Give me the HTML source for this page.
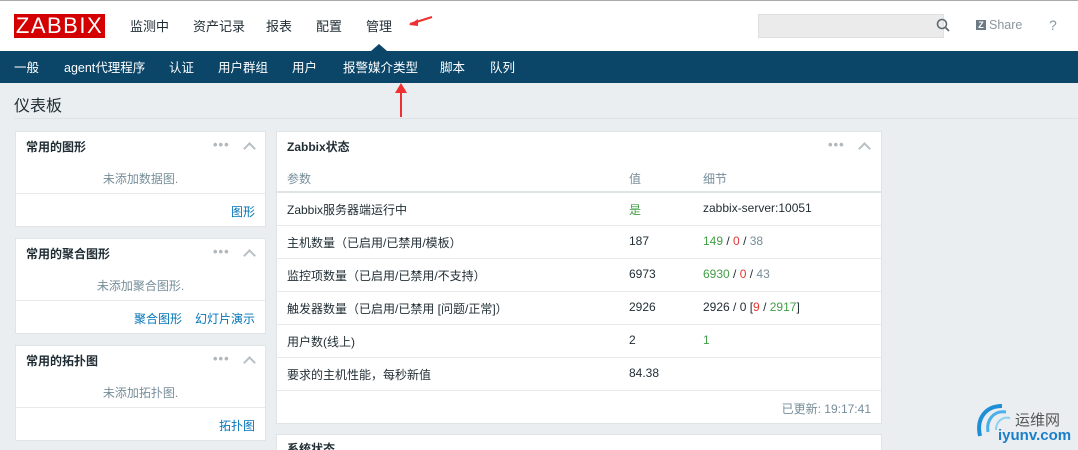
<!DOCTYPE html>
<html><head><meta charset="utf-8"><style>
*{margin:0;padding:0;box-sizing:border-box}
html{width:1078px;height:450px;overflow:hidden}
body{width:1078px;height:450px;overflow:hidden;background:#ebeef0;font-family:"Liberation Sans","Noto Sans CJK SC",sans-serif;font-size:12px;color:#1f2c33;position:relative}
.a{position:absolute;white-space:nowrap}
#top{position:absolute;left:0;top:0;width:1078px;height:51px;background:#fff;border-top:1px solid #aaa}
#sub{position:absolute;left:0;top:51px;width:1078px;height:32px;background:#0b4669}
.nav{font-size:13px;color:#1f2c33;top:16px}
.sn{font-size:12.5px;color:#fff;top:57px}
.w{position:absolute;background:#fff;border:1px solid #dfe4e7}
.wt{position:absolute;left:10px;top:6px;font-weight:bold;font-size:12px;color:#1f2c33}
.dots{position:absolute;top:5px;color:#b0b8bd;font-size:13px;letter-spacing:1px;font-weight:bold}
.car{position:absolute;width:9px;height:9px;border-left:2px solid #b8c0c5;border-top:2px solid #b8c0c5;transform:rotate(45deg)}
.emp{position:absolute;left:0;right:0;text-align:center;color:#768d99}
.hr{position:absolute;left:0;right:0;height:1px;background:#e6eaec}
.lk{position:absolute;color:#0275b8}
.r{position:absolute;left:10px;font-size:12px}
</style></head><body>
<div id="top"></div>
<div class="a" style="left:14px;top:14px;width:91px;height:24px;background:#d40000;color:#fff;font-size:22px;line-height:24px;text-align:center;letter-spacing:1.5px">ZABBIX</div>
<div class="a nav" style="left:130px">监测中</div>
<div class="a nav" style="left:193px">资产记录</div>
<div class="a nav" style="left:266px">报表</div>
<div class="a nav" style="left:316px">配置</div>
<div class="a nav" style="left:366px">管理</div>
<div class="a" style="left:371px;top:44px;width:0;height:0;border-left:8px solid transparent;border-right:8px solid transparent;border-bottom:7px solid #0b4669"></div>
<svg class="a" style="left:408px;top:15px" width="26" height="12"><path d="M2 9 L24 2" stroke="#f03030" stroke-width="2"/><path d="M1 10 L10 4 L10 11Z" fill="#f03030"/></svg>
<div class="a" style="left:758px;top:14px;width:186px;height:24px;background:#ebebeb;border:1px solid #e0e0e0"></div>
<svg class="a" style="left:936px;top:18px" width="14" height="14"><circle cx="6" cy="6" r="4.5" fill="none" stroke="#5f6b72" stroke-width="1.6"/><path d="M9.5 9.5 L13 13" stroke="#5f6b72" stroke-width="1.8"/></svg>
<div class="a" style="left:976px;top:20px;width:10px;height:10px;background:#6b7a83;color:#fff;font-size:9px;font-weight:bold;line-height:10px;text-align:center">Z</div>
<div class="a" style="left:989px;top:18px;color:#8a979e;font-size:12.5px">Share</div>
<div class="a" style="left:1049px;top:17px;color:#8a979e;font-size:14px">?</div>
<div id="sub"></div>
<div class="a sn" style="left:14px">一般</div>
<div class="a sn" style="left:64px">agent代理程序</div>
<div class="a sn" style="left:169px">认证</div>
<div class="a sn" style="left:218px">用户群组</div>
<div class="a sn" style="left:292px">用户</div>
<div class="a sn" style="left:343px">报警媒介类型</div>
<div class="a sn" style="left:440px">脚本</div>
<div class="a sn" style="left:490px">队列</div>
<div class="a" style="left:14px;top:92px;font-size:16px;color:#1f2c33">仪表板</div>
<div class="a" style="left:14px;top:118px;width:1064px;height:1px;background:#dde2e5"></div>
<svg class="a" style="left:394px;top:82px" width="14" height="36"><path d="M7 8 L7 35" stroke="#f03030" stroke-width="2"/><path d="M1 11 L7 1 L13 11Z" fill="#f03030"/></svg>

<div class="w" style="left:15px;top:131px;width:251px;height:96px">
<div class="wt">常用的图形</div><div class="dots" style="left:197px">•••</div><div class="car" style="left:229px;top:12px"></div>
<div class="emp" style="top:38px">未添加数据图.</div><div class="hr" style="top:61px"></div>
<div class="lk" style="right:10px;top:71px">图形</div></div>
<div class="w" style="left:15px;top:238px;width:251px;height:96px">
<div class="wt">常用的聚合图形</div><div class="dots" style="left:197px">•••</div><div class="car" style="left:229px;top:12px"></div>
<div class="emp" style="top:38px">未添加聚合图形.</div><div class="hr" style="top:61px"></div>
<div class="lk" style="right:10px;top:71px">幻灯片演示</div><div class="lk" style="left:118px;top:71px">聚合图形</div></div>
<div class="w" style="left:15px;top:345px;width:251px;height:96px">
<div class="wt">常用的拓扑图</div><div class="dots" style="left:197px">•••</div><div class="car" style="left:229px;top:12px"></div>
<div class="emp" style="top:38px">未添加拓扑图.</div><div class="hr" style="top:61px"></div>
<div class="lk" style="right:10px;top:71px">拓扑图</div></div>

<div class="w" style="left:276px;top:131px;width:606px;height:293px">
<div class="wt">Zabbix状态</div><div class="dots" style="left:551px">•••</div><div class="car" style="left:583px;top:12px"></div>
<div class="r" style="top:38px;color:#768d99">参数</div><div class="r" style="left:352px;top:38px;color:#768d99">值</div><div class="r" style="left:426px;top:38px;color:#768d99">细节</div>
<div class="hr" style="top:59px;height:2px;background:#dfe4e7"></div>
<div class="r" style="top:69px">Zabbix服务器端运行中</div><div class="r" style="left:352px;top:69px;color:#429e47">是</div><div class="r" style="left:426px;top:69px">zabbix-server:10051</div>
<div class="hr" style="top:93px"></div>
<div class="r" style="top:102px">主机数量（已启用/已禁用/模板）</div><div class="r" style="left:352px;top:102px">187</div><div class="r" style="left:426px;top:102px"><span style="color:#429e47">149</span> / <span style="color:#e33734">0</span> / <span style="color:#768d99">38</span></div>
<div class="hr" style="top:126px"></div>
<div class="r" style="top:135px">监控项数量（已启用/已禁用/不支持）</div><div class="r" style="left:352px;top:135px">6973</div><div class="r" style="left:426px;top:135px"><span style="color:#429e47">6930</span> / <span style="color:#e33734">0</span> / <span style="color:#768d99">43</span></div>
<div class="hr" style="top:159px"></div>
<div class="r" style="top:168px">触发器数量（已启用/已禁用 [问题/正常]）</div><div class="r" style="left:352px;top:168px">2926</div><div class="r" style="left:426px;top:168px">2926 / 0 [<span style="color:#e33734">9</span> / <span style="color:#429e47">2917</span>]</div>
<div class="hr" style="top:192px"></div>
<div class="r" style="top:201px">用户数(线上)</div><div class="r" style="left:352px;top:201px">2</div><div class="r" style="left:426px;top:201px;color:#429e47">1</div>
<div class="hr" style="top:225px"></div>
<div class="r" style="top:234px">要求的主机性能，每秒新值</div><div class="r" style="left:352px;top:234px">84.38</div>
<div class="hr" style="top:258px"></div>
<div class="r" style="left:auto;right:10px;top:268px;color:#768d99">已更新: 19:17:41</div>
</div>
<div class="w" style="left:276px;top:434px;width:606px;height:16px;border-bottom:none;overflow:hidden"><div class="wt" style="top:5px">系统状态</div></div>

<svg class="a" style="left:972px;top:402px" width="50" height="46"><path d="M30 4 C14 4 4 16 8 34" stroke="#1e8fd6" stroke-width="4" fill="none"/><path d="M34 10 C22 8 14 18 16 30" stroke="#4bb0ea" stroke-width="3" fill="none"/><path d="M38 16 C30 14 24 20 24 28" stroke="#8ccff5" stroke-width="2" fill="none"/></svg>
<div class="a" style="left:1015px;top:409px;font-size:15px;color:#555">运维网</div>
<div class="a" style="left:998px;top:427px;font-size:15px;font-weight:bold;color:#1a7fc8">iyunv.com</div>
</body></html>
